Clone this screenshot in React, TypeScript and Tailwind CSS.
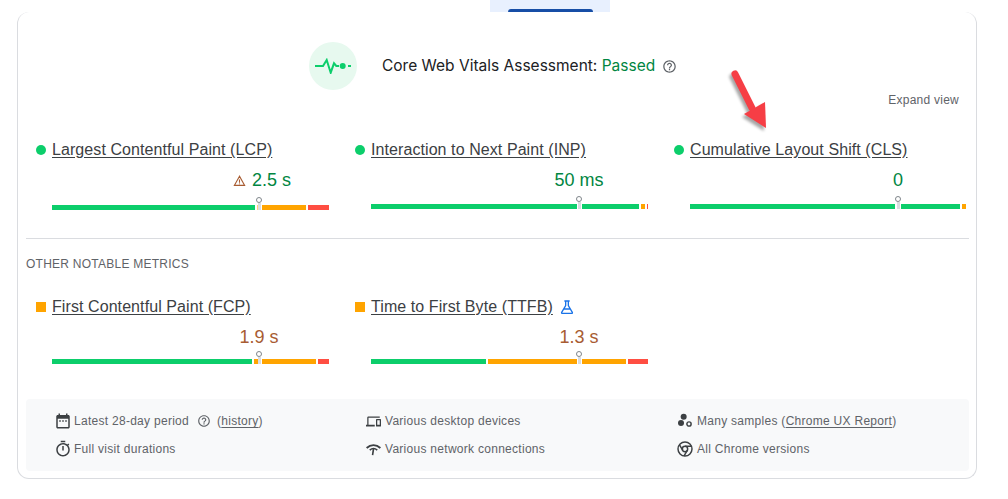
const sans = "font-['Liberation_Sans',Arial,sans-serif]";

type Segment = { width: number; color: string };

interface Metric {
  name: string;
  value: string;
  status: "good" | "average";
  warn?: boolean;
  lab?: boolean;
  marker: number;
  barGap: number;
  segments: Segment[];
}

const green = "#0cce6b";
const orange = "#ffa400";
const red = "#ff4e42";
const white = "#ffffff";

const coreMetrics: Metric[] = [
  {
    name: "Largest Contentful Paint (LCP)",
    value: "2.5 s",
    status: "good",
    warn: true,
    marker: 206,
    barGap: 13,
    segments: [
      { width: 203, color: green },
      { width: 3, color: "#ffd27a" },
      { width: 44, color: orange },
      { width: 21, color: red },
    ],
  },
  {
    name: "Interaction to Next Paint (INP)",
    value: "50 ms",
    status: "good",
    marker: 207,
    barGap: 12,
    segments: [
      { width: 206, color: green },
      { width: 1, color: white },
      { width: 57, color: green },
      { width: 4, color: orange },
      { width: 1, color: red },
    ],
  },
  {
    name: "Cumulative Layout Shift (CLS)",
    value: "0",
    status: "good",
    marker: 207,
    barGap: 12,
    segments: [
      { width: 205, color: green },
      { width: 2, color: white },
      { width: 59, color: green },
      { width: 4, color: orange },
    ],
  },
];

const otherMetrics: Metric[] = [
  {
    name: "First Contentful Paint (FCP)",
    value: "1.9 s",
    status: "average",
    marker: 206,
    barGap: 10,
    segments: [
      { width: 200, color: green },
      { width: 6, color: orange },
      { width: 54, color: orange },
      { width: 11, color: red },
    ],
  },
  {
    name: "Time to First Byte (TTFB)",
    value: "1.3 s",
    status: "average",
    lab: true,
    marker: 207,
    barGap: 10,
    segments: [
      { width: 115, color: green },
      { width: 89, color: orange },
      { width: 1, color: white },
      { width: 44, color: orange },
      { width: 20, color: red },
    ],
  },
];

function Icon({ d, className }: { d: string; className?: string }) {
  return (
    <svg viewBox="0 0 24 24" className={className} fill="currentColor">
      <path d={d} />
    </svg>
  );
}

const helpPath =
  "M11 18h2v-2h-2v2zm1-16C6.48 2 2 6.48 2 12s4.48 10 10 10 10-4.48 10-10S17.52 2 12 2zm0 18c-4.41 0-8-3.59-8-8s3.59-8 8-8 8 3.59 8 8-3.59 8-8 8zm0-14c-2.21 0-4 1.79-4 4h2c0-1.1.9-2 2-2s2 .9 2 2c0 2-3 1.75-3 5h2c0-2.25 3-2.5 3-5 0-2.21-1.79-4-4-4z";

function NetworkIcon() {
  return (
    <svg viewBox="0 0 24 24" className="mr-[2px] ml-[1px] size-[15px] text-[#3c4043]" fill="none" stroke="currentColor">
      <path d="M1 9.500C7.500 3.500 16.500 3.500 23 9.500" strokeWidth="3" />
      <path d="M6 13C10 9.500 14 9.500 18 13" strokeWidth="2.600" />
      <path d="M12 11L10.500 21" strokeWidth="2.600" />
    </svg>
  );
}

function SamplesIcon() {
  return (
    <svg viewBox="0 0 24 24" className="mr-[2px] ml-[1px] size-4 text-[#3c4043]" fill="currentColor">
      <circle cx="10" cy="5.500" r="4.500" />
      <circle cx="6" cy="15" r="4.500" />
      <circle cx="18" cy="16.500" r="3.200" fill="none" stroke="currentColor" strokeWidth="2.200" />
    </svg>
  );
}

function ChromeIcon() {
  return (
    <svg viewBox="0 0 24 24" className="mr-[2px] ml-[1px] size-4 text-[#3c4043]" fill="none" stroke="currentColor" strokeWidth="2.200">
      <circle cx="12" cy="12" r="10.500" />
      <circle cx="12" cy="12" r="4" />
      <path d="M12 8h9.500M8.600 14L3.800 5.700M15.400 14L10.600 22.300" />
    </svg>
  );
}

function Bar({ metric }: { metric: Metric }) {
  return (
    <div className="relative flex h-[5px] w-[277px] gap-[2px]" style={{ marginTop: metric.barGap }}>
      {metric.segments.map((s, i) => (
        <div key={i} className="h-full" style={{ width: s.width, backgroundColor: s.color }} />
      ))}
      <div className="absolute -top-[8px] flex w-[6px] flex-col items-center" style={{ left: metric.marker - 2 }}>
        <div className="size-[6px] rounded-full border border-[#80868b] bg-white" />
        <div className="h-[7px] w-[3px] bg-[#dadce0]" />
      </div>
    </div>
  );
}

function MetricBlock({ metric }: { metric: Metric }) {
  return (
    <div>
      <div className="flex h-5 items-center">
        {metric.status === "good" ? (
          <span className="size-[10px] rounded-full bg-[#0cce6b]" />
        ) : (
          <span className="size-[10px] bg-[#ffa400]" />
        )}
        <a className="ml-[6px] text-base leading-5 tracking-[0.08px] text-[#3c4043] underline underline-offset-2">
          {metric.name}
        </a>
        {metric.lab && (
          <svg viewBox="0 0 24 24" className="ml-[6px] size-4 text-[#1a73e8]" fill="none" stroke="currentColor" strokeWidth="2">
            <path d="M8 3h8M10 3v7L4 20a1 1 0 0 0 1 1.500h14a1 1 0 0 0 1-1.500L14 10V3M7.500 15h9" />
          </svg>
        )}
      </div>
      <div className="mt-2 ml-4 flex h-6 justify-center" style={{ width: (metric.marker + 1) * 2 }}>
        <div
          className={`flex items-center text-lg leading-6 ${
            metric.status === "good" ? "text-[#018642]" : "text-[#a85c32]"
          } ${metric.warn ? "pl-[6px]" : ""}`}
        >
          {metric.warn && (
            <svg viewBox="0 0 24 24" className="mr-[6px] size-[13px] text-[#a85c32]" fill="none" stroke="currentColor" strokeWidth="2">
              <path d="M12 4L2.500 21h19zM12 10v6M12 17.500v1.500" />
            </svg>
          )}
          {metric.value}
        </div>
      </div>
      <div className="ml-4">
        <Bar metric={metric} />
      </div>
    </div>
  );
}

function FooterItem({ icon, children }: { icon: React.ReactNode; children: React.ReactNode }) {
  return (
    <div className="flex h-5 items-center text-xs tracking-[0.28px] text-[#5f6368]">
      {icon}
      <span className="ml-[2px]">{children}</span>
    </div>
  );
}

export default function App() {
  return (
    <div className={`relative h-[499px] w-[1008px] overflow-hidden bg-white ${sans}`}>
      <div className="ml-[490px] flex h-3 w-[120px] justify-center bg-[#e8f0fe]">
        <div className="mt-[9px] h-[3px] w-[85px] rounded-t-[3px] bg-[#174ea6]" />
      </div>
      <div className="ml-[17px] h-[467px] w-[960px] rounded-xl border-x border-b border-[#dadce0] pt-[30px]">
        <div className="flex h-12 items-center pl-[291px]">
          <div className="flex size-12 items-center justify-center rounded-full bg-[#e7f9ef]">
            <svg viewBox="0 0 36 16" className="h-4 w-9 text-[#0cce6b]" fill="none" stroke="currentColor" strokeWidth="2">
              <path d="M0 8h8l3.700-6 4 12.700 3.300-9.400 2.300 2.700h2.700" />
              <circle cx="27.700" cy="8" r="3" fill="currentColor" stroke="none" />
              <path d="M33 8h3" />
            </svg>
          </div>
          <h1 className="ml-[25px] font-['Inter',sans-serif] text-[15.5px] font-normal text-[#202124]">
            Core Web Vitals Assessment: <span className="text-[#018642]">Passed</span>
          </h1>
          <Icon d={helpPath} className="ml-[7px] size-[15px] text-[#5f6368]" />
        </div>
        <div className="mt-[2px] pr-[17px] text-right text-xs leading-4 tracking-[0.25px] text-[#5f6368]">
          Expand view
        </div>
        <div className="mt-8 ml-[18px] grid grid-cols-[319px_319px_1fr]">
          {coreMetrics.map((m) => (
            <MetricBlock key={m.name} metric={m} />
          ))}
        </div>
        <div className="mt-7 mr-[7px] ml-2">
          <div className="h-px bg-[#dadce0]" />
          <div className="mt-[17px] text-xs leading-4 tracking-[0.25px] text-[#5f6368]">OTHER NOTABLE METRICS</div>
          <div className="mt-[25px] ml-[10px] grid grid-cols-[319px_319px_1fr]">
            {otherMetrics.map((m) => (
              <MetricBlock key={m.name} metric={m} />
            ))}
          </div>
          <div className="mt-[35px] grid h-[72px] grid-cols-[311px_311px_1fr] content-start gap-y-2 rounded-sm bg-[#f8f9fa] pt-3 pl-7">
            <FooterItem
              icon={
                <Icon
                  d="M19 4h-1V2h-2v2H8V2H6v2H5c-1.100 0-2 .9-2 2v14c0 1.100.9 2 2 2h14c1.100 0 2-.9 2-2V6c0-1.100-.9-2-2-2zm0 16H5V9h14v11zM7 11h2v2H7zm4 0h2v2h-2zm4 0h2v2h-2z"
                  className="size-[18px] text-[#3c4043]"
                />
              }
            >
              Latest 28-day period
              <Icon d={helpPath} className="mr-[6px] ml-2 inline size-[14px] align-[-3px]" />
              (<a className="underline underline-offset-2">history</a>)
            </FooterItem>
            <FooterItem
              icon={
                <Icon
                  d="M4 6h18V4H4c-1.100 0-2 .9-2 2v11H0v3h14v-3H4V6zm19 2h-6c-.55 0-1 .45-1 1v10c0 .55.45 1 1 1h6c.55 0 1-.45 1-1V9c0-.55-.45-1-1-1zm-1 9h-4v-7h4v7z"
                  className="mr-[2px] ml-[1px] size-[15px] text-[#3c4043]"
                />
              }
            >
              Various desktop devices
            </FooterItem>
            <FooterItem icon={<SamplesIcon />}>
              Many samples (<a className="underline underline-offset-2">Chrome UX Report</a>)
            </FooterItem>
            <FooterItem
              icon={
                <Icon
                  d="M15 1H9v2h6V1zm-4 13h2V8h-2v6zm8.030-6.610l1.420-1.420c-.43-.51-.9-.99-1.410-1.410l-1.420 1.420C16.070 4.740 14.120 4 12 4c-4.970 0-9 4.030-9 9s4.020 9 9 9 9-4.030 9-9c0-2.120-.74-4.070-1.970-5.610zM12 20c-3.870 0-7-3.130-7-7s3.130-7 7-7 7 3.130 7 7-3.130 7-7 7z"
                  className="size-[18px] text-[#3c4043]"
                />
              }
            >
              Full visit durations
            </FooterItem>
            <FooterItem icon={<NetworkIcon />}>Various network connections</FooterItem>
            <FooterItem icon={<ChromeIcon />}>All Chrome versions</FooterItem>
          </div>
        </div>
      </div>
      {/* annotation arrow drawn on top of the screenshot */}
      <svg viewBox="0 0 60 80" className="absolute top-[66px] left-[722px] h-20 w-[60px]">
        <g className="blur-[1.500px]" opacity="0.35" transform="translate(-2 3)">
          <path d="M13 8L30 42" stroke="#000000" strokeWidth="7" strokeLinecap="round" />
          <path d="M22 48L43 36L44 62Z" fill="#000000" />
        </g>
        <path d="M13 8L30 42" stroke="#f63e45" strokeWidth="7" strokeLinecap="round" />
        <path d="M22 48L43 36L44 62Z" fill="#f63e45" />
      </svg>
    </div>
  );
}
